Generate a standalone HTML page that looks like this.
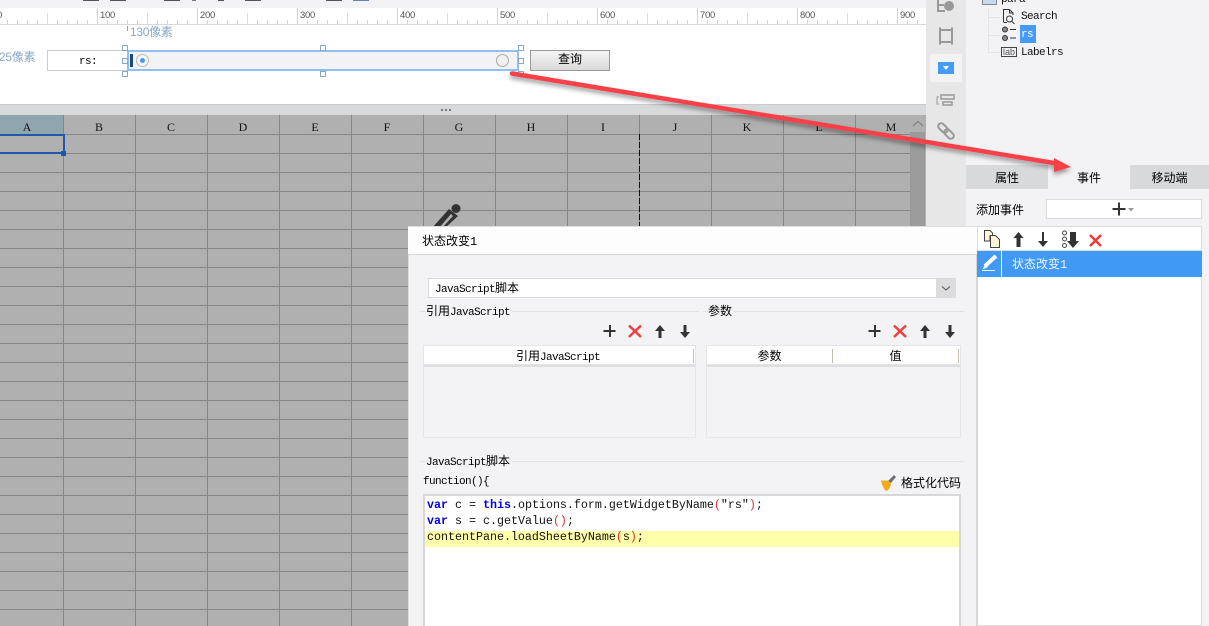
<!DOCTYPE html>
<html><head><meta charset="utf-8">
<style>
html,body{margin:0;padding:0;width:1209px;height:626px;overflow:hidden;background:#fff}
body{position:relative;font-family:"Liberation Mono","WenQuanYi Zen Hei","Noto Sans CJK SC",monospace;font-size:12px;color:#000}
div{position:absolute;box-sizing:border-box}
.t{white-space:nowrap;line-height:14px}
.l{font-size:11px;letter-spacing:-.6px}
.l b{font-size:12px;font-weight:normal;letter-spacing:0}
.h{width:6px;height:6px;background:#fff;border:1px solid #8aa8c6}
.c{font-family:"Liberation Serif",serif;font-size:12px;top:120px;width:72px;text-align:center;line-height:14px;color:#111}
.r{font-family:"Liberation Sans",sans-serif;font-size:9.500px;letter-spacing:-.3px;color:#555;top:10px;line-height:11px}
.code{font-family:"Liberation Mono",monospace;font-size:11.67px;line-height:16px;left:427px;white-space:pre;color:#111}
.k{color:#0000e6;font-weight:bold}.p{color:#e03030}
svg{position:absolute;overflow:visible}
</style></head><body>

<!-- top strip and ruler -->
<div style="left:0;top:0;width:926px;height:8px;background:#f3f3f5"></div>
<div style="left:83px;top:0;width:16px;height:1px;background:#555"></div>
<div style="left:110px;top:0;width:16px;height:1px;background:#555"></div>
<div style="left:164px;top:0;width:16px;height:1px;background:#555"></div>
<div style="left:192px;top:0;width:4px;height:1px;background:#777"></div>
<div style="left:218px;top:0;width:6px;height:1px;background:#555"></div>
<div style="left:245px;top:0;width:16px;height:1px;background:#555"></div>
<div style="left:326px;top:0;width:16px;height:1px;background:#555"></div>
<div style="left:353px;top:0;width:16px;height:1px;background:#5f84b8"></div>
<div style="left:0;top:8px;width:926px;height:17px;background:#fff;border-bottom:1px solid #d8d8d8"></div>
<div style="left:-3px;top:20px;width:929px;height:4px;background:repeating-linear-gradient(90deg,#d4d4d4 0 1px,transparent 1px 10px)"></div>
<div style="left:-3px;top:13px;width:929px;height:11px;background:repeating-linear-gradient(90deg,#dcdcdc 0 1px,transparent 1px 50px)"></div>
<div style="left:-3px;top:8px;width:929px;height:16px;background:repeating-linear-gradient(90deg,#d4d4d4 0 1px,transparent 1px 100px)"></div>
<div class="r" style="left:-3px">0</div><div class="r" style="left:100px">100</div><div class="r" style="left:200px">200</div><div class="r" style="left:300px">300</div><div class="r" style="left:400px">400</div><div class="r" style="left:500px">500</div><div class="r" style="left:600px">600</div><div class="r" style="left:700px">700</div><div class="r" style="left:800px">800</div><div class="r" style="left:900px">900</div>

<!-- canvas -->
<div style="left:0;top:25px;width:926px;height:79px;background:#fff"></div>
<div style="left:127px;top:26px;width:1px;height:5px;background:#8aa8c6"></div>
<div class="t" style="left:130px;top:25px;color:#8aa8c6;font-family:'Liberation Sans','WenQuanYi Zen Hei',sans-serif;font-size:12px;letter-spacing:-.3px">130像素</div>
<div class="t" style="left:-1px;top:50px;color:#8aa8c6;font-family:'Liberation Sans','WenQuanYi Zen Hei',sans-serif;font-size:12px;letter-spacing:-.3px">25像素</div>
<div style="left:47px;top:50px;width:81px;height:21px;background:#fff;border:1px solid #ccc"></div>
<div class="t l" style="left:79px;top:55px">rs:</div>
<div style="left:127px;top:50px;width:392px;height:21px;background:#f3f3f5;border:2px solid #8fc0f0"></div>
<div style="left:130px;top:54px;width:3px;height:13px;background:#1c4a78"></div>
<div style="left:136px;top:54px;width:13px;height:13px;border:1px solid #bbb;border-radius:50%;background:#f6f6f6"></div>
<div style="left:140px;top:58px;width:5px;height:5px;border-radius:50%;background:#4a99f5"></div>
<div style="left:496px;top:54px;width:13px;height:13px;border:1px solid #aaa;border-radius:50%;background:#f0f0f0"></div>
<div class="h" style="left:122px;top:45px"></div><div class="h" style="left:122px;top:58px"></div><div class="h" style="left:122px;top:71px"></div>
<div class="h" style="left:320px;top:45px"></div><div class="h" style="left:320px;top:71px"></div>
<div class="h" style="left:518px;top:45px"></div><div class="h" style="left:518px;top:58px"></div><div class="h" style="left:518px;top:71px"></div>
<div style="left:530px;top:50px;width:80px;height:21px;background:linear-gradient(#f5f5f5,#d9d9d9);border:1px solid #999;text-align:center;line-height:19px;font-size:12px">查询</div>

<!-- splitter -->
<div style="left:0;top:104px;width:926px;height:11px;background:#d8d9db;border-top:1px solid #ccc"></div>
<div style="left:441px;top:109px;width:10px;height:2px;background:repeating-linear-gradient(90deg,#777 0 2px,transparent 2px 4px)"></div>

<!-- grid -->
<div style="left:0;top:115px;width:926px;height:511px;background:#b0b0b0"></div>
<div style="left:63px;top:115px;width:847px;height:511px;background:repeating-linear-gradient(90deg,#868686 0 1px,transparent 1px 72px)"></div>
<div style="left:0;top:134px;width:910px;height:492px;background:repeating-linear-gradient(180deg,#868686 0 1px,transparent 1px 19px)"></div>
<div style="left:0;top:115px;width:63px;height:19px;background:#8fa6ae"></div>
<div class="c" style="left:-9px">A</div><div class="c" style="left:63px">B</div><div class="c" style="left:135px">C</div><div class="c" style="left:207px">D</div><div class="c" style="left:279px">E</div><div class="c" style="left:351px">F</div><div class="c" style="left:423px">G</div><div class="c" style="left:495px">H</div><div class="c" style="left:567px">I</div><div class="c" style="left:639px">J</div><div class="c" style="left:711px">K</div><div class="c" style="left:783px">L</div><div class="c" style="left:855px">M</div>
<div style="left:0;top:134px;width:65px;height:20px;border:2px solid #2059a8;border-left:0"></div>
<div style="left:61px;top:151px;width:5px;height:5px;background:#2059a8"></div>
<div style="left:639px;top:134px;width:1px;height:92px;background:repeating-linear-gradient(180deg,#111 0 6px,transparent 6px 8px)"></div>
<div style="left:910px;top:115px;width:15px;height:511px;background:#9b9b9b"></div>
<div style="left:910px;top:115px;width:15px;height:17px;background:#b0b0b0"></div>
<svg style="left:910px;top:115px" width="16" height="17"><path d="M3 11L8 6.500L13 11" fill="none" stroke="#7a7a7a" stroke-width="1"/></svg>

<!-- pencil -->
<svg style="left:425px;top:195px" width="50" height="35"><path d="M7 33L24 14L33 21L20 33Z" fill="#333"/><path d="M14 33L26 19L28 21L17 33Z" fill="#b0b0b0"/><circle cx="31" cy="13.500" r="4.500" fill="#333"/></svg>

<!-- side icon strip -->
<div style="left:926px;top:0;width:40px;height:226px;background:#e7e7e7"></div>
<div style="left:930px;top:54px;width:32px;height:28px;background:#f3f3f5"></div>
<div style="left:938px;top:62px;width:16px;height:12px;background:#459bf6"></div>
<svg style="left:926px;top:0" width="40" height="145">
<path d="M17 66L23 66L20 70Z" fill="#fff"/>
<g fill="none" stroke="#999" stroke-width="2">
<path d="M12 0V11H19M12 5H18"/><circle cx="23" cy="6" r="5" fill="#999" stroke="none"/>
<rect x="14" y="30" width="12" height="12"/>
<path d="M13 29h2M25 29h2M13 43h2M25 43h2" stroke-width="3"/>
<rect x="15" y="95" width="13" height="4" stroke-width="1.500"/><rect x="17" y="102" width="9" height="3" stroke-width="1.500"/>
<path d="M13 97H11V104H13" stroke-width="1"/>
<rect x="11.500" y="125" width="11" height="6" rx="3" transform="rotate(45 17 128)"/>
<rect x="17.500" y="131" width="11" height="6" rx="3" transform="rotate(45 23 134)"/>
</g></svg>

<!-- tree -->
<div style="left:966px;top:0;width:243px;height:165px;background:#f3f3f5"></div>
<div style="left:982px;top:0;width:15px;height:5px;background:#c6d8f4;border:1px solid #888;border-top:0"></div>
<div class="t l" style="left:1001px;top:-7px;color:#111">para</div>
<div style="left:988px;top:8px;width:1px;height:45px;background:#e4e4e6"></div>
<div style="left:988px;top:17px;width:12px;height:1px;background:#e4e4e6"></div>
<div style="left:988px;top:35px;width:12px;height:1px;background:#e4e4e6"></div>
<div style="left:988px;top:52px;width:12px;height:1px;background:#e4e4e6"></div>
<svg style="left:1001px;top:9px" width="16" height="16"><path d="M2.500 13V0.500H8.500L12 4V6M8.500 .5V4H12M6 13.500H2.500" fill="none" stroke="#333"/><circle cx="8.500" cy="10" r="3" fill="none" stroke="#333"/><path d="M11 12.500L13.500 15" stroke="#333"/></svg>
<svg style="left:1001px;top:26px" width="16" height="16"><circle cx="4" cy="3.500" r="2.500" fill="#888" stroke="#333"/><circle cx="4" cy="12" r="2.500" fill="#888" stroke="#333"/><path d="M9 3.500H15M9 12H15" stroke="#333"/></svg>
<div style="left:1020px;top:25px;width:16px;height:18px;background:#459bf6"></div>
<div class="t l" style="left:1021px;top:28px;color:#fff">rs</div>
<div style="left:1001px;top:47px;width:16px;height:10px;border:1px solid #444;font:9px/8px 'Liberation Sans',sans-serif;text-align:center;color:#555;background:#f3f3f5">lab</div>
<div class="t l" style="left:1021px;top:10px;color:#111">Search</div>
<div class="t l" style="left:1021px;top:46px;color:#111">Labelrs</div>

<!-- tabs -->
<div style="left:966px;top:165px;width:243px;height:461px;background:#f3f3f5"></div>
<div style="left:966px;top:165px;width:82px;height:24px;background:#d8d9db;text-align:center;line-height:28px">属性</div>
<div style="left:1048px;top:165px;width:82px;height:24px;background:#f3f3f5;text-align:center;line-height:28px">事件</div>
<div style="left:1130px;top:165px;width:79px;height:24px;background:#d8d9db;text-align:center;line-height:28px">移动端</div>
<div class="t" style="left:976px;top:204px">添加事件</div>
<div style="left:1046px;top:199px;width:156px;height:20px;background:#fff;border:1px solid #ddd"></div>
<svg style="left:1109px;top:200px" width="30" height="18"><path d="M10 2.500V15.500M3.500 9H16.500" stroke="#333" stroke-width="2"/><path d="M19 8H25L22 11.500Z" fill="#999"/></svg>

<!-- list panel -->
<div style="left:977px;top:226px;width:225px;height:400px;background:#fff;border:1px solid #ddd"></div>
<div style="left:977px;top:250px;width:225px;height:1px;background:#ddd"></div>
<div style="left:977px;top:251px;width:225px;height:26px;background:#4099f5"></div>
<div style="left:1001px;top:251px;width:1px;height:26px;background:#fff"></div>
<div class="t" style="left:1012px;top:258px;color:#eef5ff">状态改变1</div>
<svg style="left:977px;top:226px" width="225" height="52">
<path d="M7.500 4.500H13L15.500 7V9.500H13V15H7.500Z" fill="#fff3d8" stroke="#444"/>
<path d="M13.500 9.500H18.500L22.500 13.500V21.500H13.500Z" fill="#fff3d8" stroke="#444"/>
<path d="M41.500 6L46.500 12H43.500V21H39.500V12H36.500Z" fill="#333"/>
<path d="M65 6H67V15H71L66 21L61 15H65Z" fill="#333"/>
<circle cx="87.500" cy="7" r="2" fill="none" stroke="#444"/><circle cx="87.500" cy="13" r="2" fill="none" stroke="#444"/><circle cx="87.500" cy="19.500" r="2" fill="none" stroke="#444"/>
<path d="M93 6H99V15H102L96 22L90 15H93Z" fill="#333"/>
<path d="M113 9L124 20M124 9L113 20" stroke="#ee3b3b" stroke-width="2.500"/>
<path d="M8 40L19 30" stroke="#fff" stroke-width="4"/><path d="M5.500 43.500L8 38L11 41Z" fill="#fff"/><path d="M5 44.500H18" stroke="#fff"/>
</svg>

<!-- dialog -->
<div style="left:408px;top:226px;width:569px;height:400px;background:#f3f3f5;border-left:1px solid #ddd;border-right:1px solid #d5d5d5"></div>
<div style="left:408px;top:226px;width:569px;height:29px;background:#fdfdfd;border-bottom:1px solid #d8d8d8;border-top:1px solid #ddd"></div>
<div class="t" style="left:422px;top:235px">状态改变1</div>
<div style="left:428px;top:278px;width:528px;height:20px;background:#fff;border:1px solid #d8d8d8"></div>
<div class="t l" style="left:435px;top:282px">JavaScript<b>脚本</b></div>
<div style="left:936px;top:279px;width:20px;height:19px;background:#dcdcde"></div>
<svg style="left:936px;top:279px" width="20" height="19"><path d="M6 7.500L10 11L14 7.500" fill="none" stroke="#555"/></svg>

<div style="left:420px;top:311px;width:279px;height:1px;background:#e3e3e6"></div>
<div class="t l" style="left:426px;top:305px;background:#f3f3f5;padding-right:1px"><b>引用</b>JavaScript</div>
<div style="left:703px;top:311px;width:261px;height:1px;background:#e3e3e6"></div>
<div class="t" style="left:708px;top:305px;background:#f3f3f5;padding-right:1px">参数</div>

<svg style="left:600px;top:322px" width="360" height="18">
<g><path d="M10 3V15M3.500 9H15.500" stroke="#333" stroke-width="2"/><path d="M29 3.500L41 15M41 3.500L29 15" stroke="#ee4040" stroke-width="2.500"/><path d="M60 3L65 9H61.500V16H58.500V9H55Z" fill="#333"/><path d="M83.500 3H86.500V10H90L85 16L80 10H83.500Z" fill="#333"/></g>
<g transform="translate(265 0)"><path d="M10 3V15M3.500 9H15.500" stroke="#333" stroke-width="2"/><path d="M29 3.500L41 15M41 3.500L29 15" stroke="#ee4040" stroke-width="2.500"/><path d="M60 3L65 9H61.500V16H58.500V9H55Z" fill="#333"/><path d="M83.500 3H86.500V10H90L85 16L80 10H83.500Z" fill="#333"/></g>
</svg>

<div style="left:423px;top:345px;width:273px;height:93px;background:#f3f3f5;border:1px solid #e6e6e8"></div>
<div style="left:424px;top:346px;width:271px;height:19px;background:#fff;border-bottom:1px solid #e4e4e4"></div>
<div style="left:424px;top:365px;width:271px;height:2px;background:#dedede"></div>
<div style="left:693px;top:349px;width:1px;height:14px;background:#c4bfb0"></div>
<div class="t l" style="left:423px;top:350px;width:270px;text-align:center;"><b>引用</b>JavaScript</div>

<div style="left:706px;top:345px;width:255px;height:93px;background:#f3f3f5;border:1px solid #e6e6e8"></div>
<div style="left:707px;top:346px;width:253px;height:19px;background:#fff;border-bottom:1px solid #e4e4e4"></div>
<div style="left:707px;top:365px;width:253px;height:2px;background:#dedede"></div>
<div style="left:832px;top:349px;width:1px;height:14px;background:#c4bfb0"></div>
<div style="left:958px;top:349px;width:1px;height:14px;background:#c4bfb0"></div>
<div class="t" style="left:707px;top:350px;width:125px;text-align:center">参数</div>
<div class="t" style="left:833px;top:350px;width:125px;text-align:center">值</div>

<div style="left:420px;top:461px;width:544px;height:1px;background:#e3e3e6"></div>
<div class="t l" style="left:426px;top:455px;background:#f3f3f5;padding-right:2px">JavaScript<b>脚本</b></div>
<div class="t l" style="left:423px;top:475px">function(){</div>
<svg style="left:880px;top:474px" width="18" height="18"><path d="M14 1L16 3L11 9L8 7Z" fill="#6d7079"/><path d="M1 6.500L8 6.500L11 9.500Q10 16 6 17Q2 13 1 6.500Z" fill="#f3ac18"/></svg>
<div class="t" style="left:901px;top:477px">格式化代码</div>

<div style="left:423px;top:494px;width:538px;height:132px;background:#fff;border:2px solid #d8d8d8;border-bottom:0"></div>
<div style="left:425px;top:531px;width:534px;height:16px;background:#ffffaa"></div>
<div class="code" style="top:497px"><span class="k">var</span> c = <span class="k">this</span>.options.form.getWidgetByName<span class="p">(</span>"rs"<span class="p">)</span>;</div>
<div class="code" style="top:513px"><span class="k">var</span> s = c.getValue<span class="p">()</span>;</div>
<div class="code" style="top:529px">contentPane.loadSheetByName<span class="p">(</span>s<span class="p">)</span>;</div>

<!-- red arrow -->
<svg style="left:0;top:0" width="1209" height="626">
<defs><filter id="s" x="-5%" y="-30%" width="110%" height="180%"><feDropShadow dx="0" dy="3" stdDeviation="2.500" flood-color="#000" flood-opacity=".4"/></filter></defs>
<g filter="url(#s)"><path d="M512 73.500L1060 164" stroke="#f8404a" stroke-width="4.500" stroke-linecap="round" fill="none"/><path d="M1054 158L1071 167L1054 172Z" fill="#f8404a"/></g>
</svg>
</body></html>
